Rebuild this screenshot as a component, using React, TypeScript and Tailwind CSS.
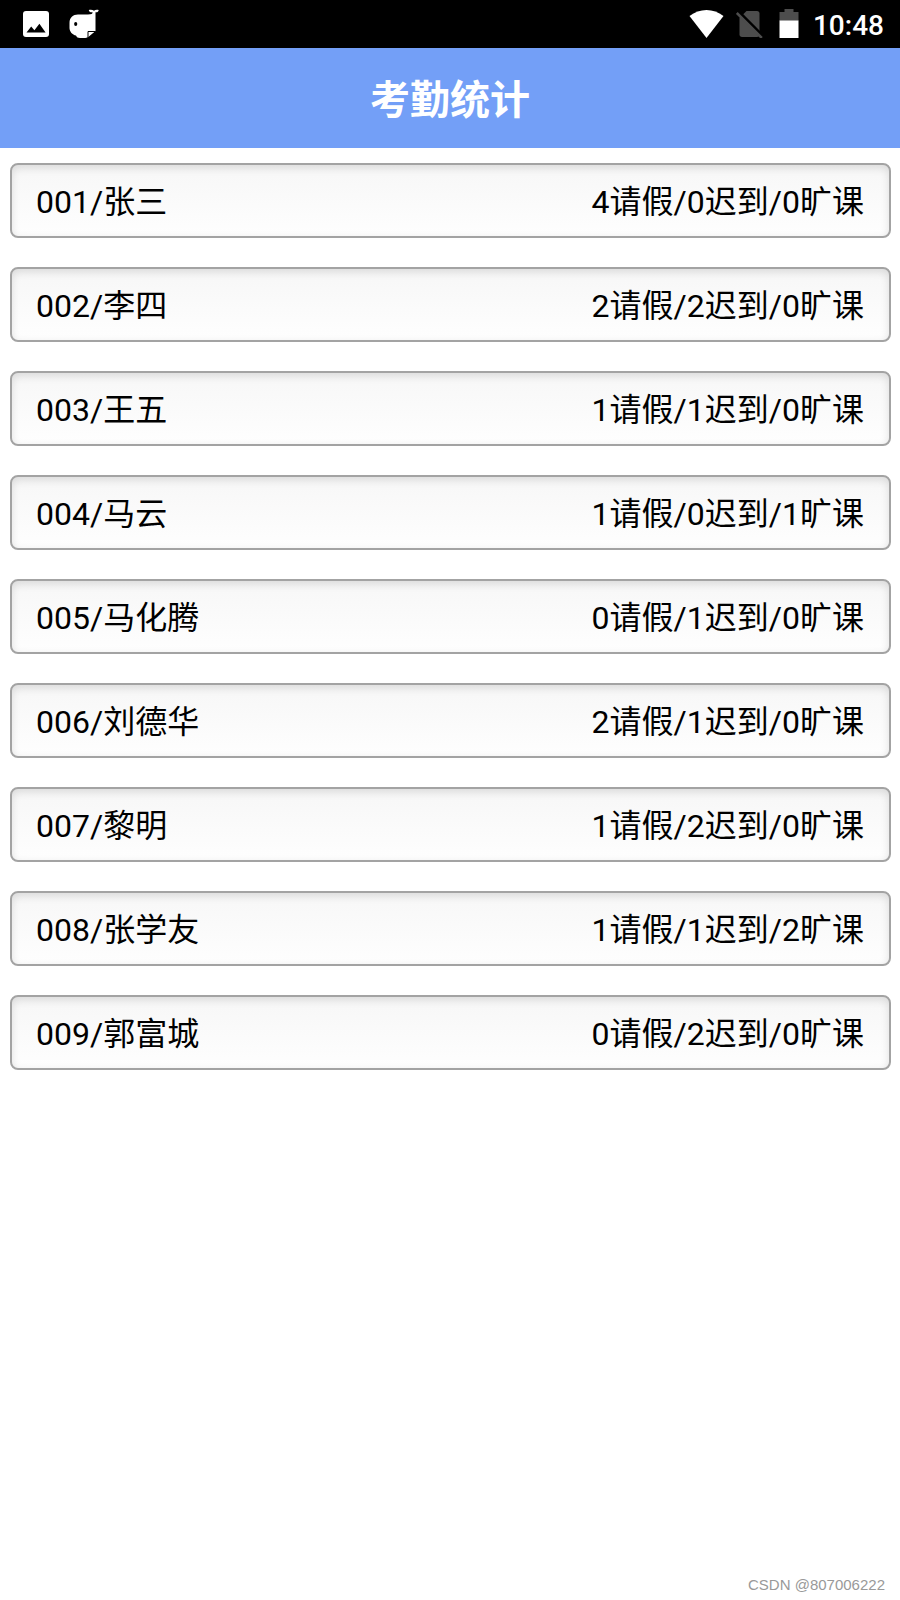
interface AttendanceRecord {
  id: string;
  name: string;
  leave: number;
  late: number;
  absent: number;
}

const RECORDS: AttendanceRecord[] = [
  { id: "001", name: "张三", leave: 4, late: 0, absent: 0 },
  { id: "002", name: "李四", leave: 2, late: 2, absent: 0 },
  { id: "003", name: "王五", leave: 1, late: 1, absent: 0 },
  { id: "004", name: "马云", leave: 1, late: 0, absent: 1 },
  { id: "005", name: "马化腾", leave: 0, late: 1, absent: 0 },
  { id: "006", name: "刘德华", leave: 2, late: 1, absent: 0 },
  { id: "007", name: "黎明", leave: 1, late: 2, absent: 0 },
  { id: "008", name: "张学友", leave: 1, late: 1, absent: 2 },
  { id: "009", name: "郭富城", leave: 0, late: 2, absent: 0 },
];

function PictureIcon() {
  return (
    <svg viewBox="0 0 26 26" className="size-[26px]" aria-hidden="true">
      <rect width="26" height="26" rx="3" fill="#fff" />
      <path d="M3.500 21.500 8.200 15.400l3.200 3.800 5-6.400 6.200 8.700z" fill="#000" />
    </svg>
  );
}

function WhaleIcon() {
  return (
    <svg viewBox="0 0 30 30" className="size-[30px]" aria-hidden="true">
      <path
        d="M9 5.500h10c3.500 0 4.600-.8 4.600-2.200-2.200.3-3.600-.5-3.800-2.300 2-.6 3.900-.3 5.200.7 1.300-1 2.900-1.300 4.700-.7-.2 1.700-1.300 2.500-3.200 2.300V22L19 28.300c-1 .5-2 .7-4 .7h-4c-2 0-3.500-.8-4-2.500C3.500 26 .5 22.500.5 19V14C.5 8.500 4 5.500 9 5.500z"
        fill="#fff"
      />
      <ellipse cx="6.700" cy="15" rx="1.600" ry="1.900" fill="#000" />
      <path d="M19 29v-6.500h7.500" fill="none" stroke="#000" strokeWidth="1" />
      <path d="M20 28.500 26 23v6z" fill="#000" />
    </svg>
  );
}

function WifiIcon() {
  return (
    <svg viewBox="0 0 36 28" className="h-7 w-9" aria-hidden="true">
      <path d="M17.500 28 .5 6C5.500 2 11.500 0 17.500 0s12 2 17 6z" fill="#fff" />
    </svg>
  );
}

function NoSimIcon() {
  return (
    <svg viewBox="0 0 28 28" className="size-7" aria-hidden="true">
      <path
        d="M10.500 1H21c1.500 0 2.500 1 2.500 2.500v21c0 1.500-1 2.500-2.500 2.500H6c-1.500 0-2.500-1-2.500-2.500V8z"
        fill="#4d4d4d"
      />
      <path d="M2 1 27 26" stroke="#000" strokeWidth="3" />
      <path d="M.8 3 25.800 28" stroke="#4d4d4d" strokeWidth="2.500" />
    </svg>
  );
}

function BatteryIcon() {
  return (
    <svg viewBox="0 0 20 30" className="h-[30px] w-5" aria-hidden="true">
      <path d="M5.500 0h9v3H19.500v9H.5V3h5z" fill="#4d4d4d" />
      <path d="M.5 11.500h19V29H.5z" fill="#fff" />
    </svg>
  );
}

function StatusBar() {
  return (
    <div className="flex h-12 items-center justify-between bg-black pr-4 pl-[23px]">
      <div className="flex items-center gap-5">
        <PictureIcon />
        <WhaleIcon />
      </div>
      <div className="flex items-center">
        <WifiIcon />
        <div className="ml-[11px] flex">
          <NoSimIcon />
        </div>
        <div className="mr-[14px] ml-[15px] flex">
          <BatteryIcon />
        </div>
        <time className="pt-1 text-[28px] leading-8 font-medium text-white">10:48</time>
      </div>
    </div>
  );
}

function RecordRow({ record }: { record: AttendanceRecord }) {
  return (
    <li className="flex h-[75px] items-center justify-between rounded-lg border-2 border-[#a3a3a3] bg-linear-to-b from-[#f7f7f7] to-[#fefefe] pt-[2px] pr-[25px] pl-6 text-[32px] leading-10 text-black shadow-[inset_0_3px_8px_rgba(0,0,0,0.12)]">
      <span>
        {record.id}/{record.name}
      </span>
      <span>
        {record.leave}请假/{record.late}迟到/{record.absent}旷课
      </span>
    </li>
  );
}

export default function App() {
  return (
    <div className="flex min-h-screen flex-col bg-white font-['Roboto','Noto_Sans_CJK_SC',sans-serif]">
      <StatusBar />
      <header className="flex h-[100px] items-center justify-center bg-[#739ff7] pt-[6px]">
        <h1 className="text-[40px] leading-12 font-bold text-white">考勤统计</h1>
      </header>
      <main className="flex-1 pt-[15px] pr-[9px] pl-[10px]">
        <ul className="flex flex-col gap-[29px]">
          {RECORDS.map((record) => (
            <RecordRow key={record.id} record={record} />
          ))}
        </ul>
      </main>
      <footer className="pr-[15px] pb-[5px] text-right font-['Liberation_Sans',sans-serif] text-[15px] leading-5 text-[#999999]">
        CSDN @807006222
      </footer>
    </div>
  );
}
